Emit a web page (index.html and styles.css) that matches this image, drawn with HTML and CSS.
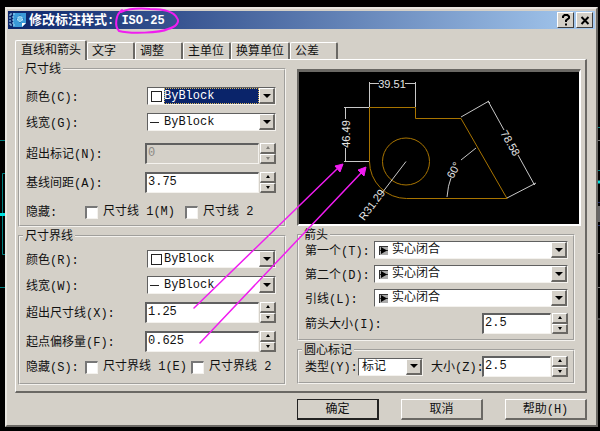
FILE: index.html
```
<!DOCTYPE html>
<html lang="zh-CN">

<head>
    <meta charset="UTF-8">
    <meta name="viewport" content="width=device-width, initial-scale=1.0">
    <title>修改标注样式: ISO-25</title>
    <link rel="stylesheet" href="styles.css">
</head>

<body>
    <!-- Drawing area behind the dialog -->
    <svg class="canvas" width="600" height="431" viewBox="0 0 600 431" aria-hidden="true">
        <g fill="none" stroke="#008080">
            <path d="M0 140.500H6M6 173.500H2.500V254.500H6M0 287.500H6M597 127.500H600M597 170.500H600" />
            <path d="M0 214.500H6M597 182H600" stroke="#00e0e0" stroke-width="3" />
            <path d="M597 140.500H600M597 253.500H600M597 287.500H600M597 319H600" stroke="#777" />
            <path d="M598.500 206V222" stroke="#666" stroke-width="3" />
            <path d="M597 202.500H600M597 225.500H600" stroke="#23306a" />
        </g>
    </svg>

    <main class="dialog">
        <header class="titlebar">
            <svg class="app-icon" width="18" height="16" viewBox="0 0 18 16" aria-hidden="true">
                <path d="M4 1H17V11L13 15H4Z" fill="#3a9ad9" />
                <path d="M17 11H13V15Z" fill="#fff" />
                <path d="M1 2H7M1 13H7M1 2V13M3 5H6M3 8H6M3 11H6" stroke="#9fd4f2" fill="none" stroke-dasharray="2 1" />
                <path d="M7 7H15M11 3V11" stroke="#1763a6" fill="none" />
                <circle cx="11" cy="7" r="2.500" fill="#7cc8ee" stroke="#d5f0fb" stroke-dasharray="2 1" />
            </svg>
            <h1>修改标注样式<span>: ISO-25</span></h1>
            <button class="title-btn" type="button" aria-label="帮助">
                <svg width="10" height="12" viewBox="0 0 10 12"><path d="M2 4V2.500L3.500 1H6.500L8 2.500V4L5 6.500V8M5 9.500V11.500" fill="none" stroke="#000" stroke-width="2" /></svg>
            </button>
            <button class="title-btn" type="button" aria-label="关闭">
                <svg width="10" height="12" viewBox="0 0 10 12"><path d="M1.500 3L8.500 10M8.500 3L1.500 10" stroke="#000" stroke-width="2" /></svg>
            </button>
        </header>

        <!-- Tabs -->
        <nav class="tabs" role="tablist">
            <button class="tab active" type="button" role="tab" aria-selected="true">直线和箭头</button>
            <button class="tab" type="button" role="tab">文字</button>
            <button class="tab" type="button" role="tab">调整</button>
            <button class="tab" type="button" role="tab">主单位</button>
            <button class="tab" type="button" role="tab">换算单位</button>
            <button class="tab" type="button" role="tab">公差</button>
        </nav>

        <div class="panel">
            <div class="column">
                <!-- Dimension lines -->
                <fieldset class="group group-dim">
                    <legend>尺寸线</legend>
                    <div class="row">
                        <label for="dimColor">颜色(C):</label>
                        <div class="combo focused">
                            <i class="swatch"></i>
                            <select id="dimColor"><option>ByBlock</option></select>
                            <i class="arrow"></i>
                        </div>
                    </div>
                    <div class="row">
                        <label for="dimWeight">线宽(G):</label>
                        <div class="combo">
                            <i class="dash"></i>
                            <select id="dimWeight"><option>ByBlock</option></select>
                            <i class="arrow"></i>
                        </div>
                    </div>
                    <div class="row spaced">
                        <label for="dimExtend">超出标记(N):</label>
                        <div class="spinner">
                            <input type="text" id="dimExtend" value="0" disabled>
                            <div class="steps">
                                <button type="button" aria-label="增加" disabled></button>
                                <button type="button" aria-label="减少" disabled></button>
                            </div>
                        </div>
                    </div>
                    <div class="row">
                        <label for="baseline">基线间距(A):</label>
                        <div class="spinner">
                            <input type="text" id="baseline" value="3.75">
                            <div class="steps">
                                <button type="button" aria-label="增加"></button>
                                <button type="button" aria-label="减少"></button>
                            </div>
                        </div>
                    </div>
                    <div class="row checks spaced">
                        <span class="caption">隐藏:</span>
                        <label><input type="checkbox">尺寸线 1(M)</label>
                        <label><input type="checkbox">尺寸线 2</label>
                    </div>
                </fieldset>

                <!-- Extension lines -->
                <fieldset class="group group-ext">
                    <legend>尺寸界线</legend>
                    <div class="row">
                        <label for="extColor">颜色(R):</label>
                        <div class="combo">
                            <i class="swatch"></i>
                            <select id="extColor"><option>ByBlock</option></select>
                            <i class="arrow"></i>
                        </div>
                    </div>
                    <div class="row">
                        <label for="extWeight">线宽(W):</label>
                        <div class="combo">
                            <i class="dash"></i>
                            <select id="extWeight"><option>ByBlock</option></select>
                            <i class="arrow"></i>
                        </div>
                    </div>
                    <div class="row">
                        <label for="extBeyond">超出尺寸线(X):</label>
                        <div class="spinner">
                            <input type="text" id="extBeyond" value="1.25">
                            <div class="steps">
                                <button type="button" aria-label="增加"></button>
                                <button type="button" aria-label="减少"></button>
                            </div>
                        </div>
                    </div>
                    <div class="row">
                        <label for="extOffset">起点偏移量(F):</label>
                        <div class="spinner">
                            <input type="text" id="extOffset" value="0.625">
                            <div class="steps">
                                <button type="button" aria-label="增加"></button>
                                <button type="button" aria-label="减少"></button>
                            </div>
                        </div>
                    </div>
                    <div class="row checks">
                        <span class="caption">隐藏(S):</span>
                        <label><input type="checkbox">尺寸界线 1(E)</label>
                        <label><input type="checkbox">尺寸界线 2</label>
                    </div>
                </fieldset>
            </div>

            <div class="column">
                <!-- Preview -->
                <div class="preview">
                    <svg viewBox="0 0 280 152" role="img" aria-label="预览">
                        <g fill="none" stroke="#a87400">
                            <path d="M70.500 89.500V35.500H116.500V46.500H162L208 126.500H107.500A37 37 0 0 1 70.500 89.500" />
                            <circle cx="107" cy="89.500" r="23.500" />
                        </g>
                        <g fill="none" stroke="#c8c8c8">
                            <path d="M70.500 35V10M116.500 35V10M70 11.500H80M106 11.500H117" />
                            <path d="M70 35.500H45M70 89.500H45M46.500 35V47M46.500 76V90" />
                            <path d="M107 89.500L83 121M162 45L190 29M208 126L237 111M189 29L205 58M219 83L235 112" />
                            <path d="M148 125Q149 113 152 106M162 88L177 76M189 29L191 31M234 111L236 113" />
                        </g>
                        <g class="dims">
                            <text x="93" y="16">39.51</text>
                            <text transform="translate(51 62) rotate(-90)">46.49</text>
                            <text transform="translate(76 135) rotate(-53)">R31.29</text>
                            <text transform="translate(158 100) rotate(-62)">60°</text>
                            <text transform="translate(208 73) rotate(60)">78.58</text>
                        </g>
                    </svg>
                </div>

                <!-- Arrowheads -->
                <fieldset class="group group-arrow">
                    <legend>箭头</legend>
                    <div class="row">
                        <label for="first">第一个(T):</label>
                        <div class="combo">
                            <svg class="head" width="9" height="9" viewBox="0 0 9 9"><path d="M0 0H9V9H0Z" fill="#aaa" /><path d="M0 4.500H9M.5 0V9M0 .5H9" stroke="#333" /><path d="M2 1L8 4.500L2 8Z" /></svg>
                            <select id="first"><option>实心闭合</option></select>
                            <i class="arrow"></i>
                        </div>
                    </div>
                    <div class="row">
                        <label for="second">第二个(D):</label>
                        <div class="combo">
                            <svg class="head" width="9" height="9" viewBox="0 0 9 9"><path d="M0 0H9V9H0Z" fill="#aaa" /><path d="M0 4.500H9M.5 0V9M0 .5H9" stroke="#333" /><path d="M2 1L8 4.500L2 8Z" /></svg>
                            <select id="second"><option>实心闭合</option></select>
                            <i class="arrow"></i>
                        </div>
                    </div>
                    <div class="row">
                        <label for="leader">引线(L):</label>
                        <div class="combo">
                            <svg class="head" width="9" height="9" viewBox="0 0 9 9"><path d="M0 0H9V9H0Z" fill="#aaa" /><path d="M0 4.500H9M.5 0V9M0 .5H9" stroke="#333" /><path d="M2 1L8 4.500L2 8Z" /></svg>
                            <select id="leader"><option>实心闭合</option></select>
                            <i class="arrow"></i>
                        </div>
                    </div>
                    <div class="row">
                        <label for="arrowSize">箭头大小(I):</label>
                        <div class="spinner short">
                            <input type="text" id="arrowSize" value="2.5">
                            <div class="steps">
                                <button type="button" aria-label="增加"></button>
                                <button type="button" aria-label="减少"></button>
                            </div>
                        </div>
                    </div>
                </fieldset>

                <!-- Center marks -->
                <fieldset class="group group-center">
                    <legend>圆心标记</legend>
                    <div class="row">
                        <label for="markType">类型(Y):</label>
                        <div class="combo">
                            <select id="markType"><option>标记</option></select>
                            <i class="arrow"></i>
                        </div>
                        <label for="markSize">大小(Z):</label>
                        <div class="spinner short">
                            <input type="text" id="markSize" value="2.5">
                            <div class="steps">
                                <button type="button" aria-label="增加"></button>
                                <button type="button" aria-label="减少"></button>
                            </div>
                        </div>
                    </div>
                </fieldset>
            </div>
        </div>

        <footer class="actions">
            <button class="default" type="button">确定</button>
            <button type="button">取消</button>
            <button type="button">帮助(H)</button>
        </footer>
    </main>

    <!-- Marker pen notes on top of the dialog -->
    <svg class="notes" width="600" height="431" viewBox="0 0 600 431" aria-hidden="true">
        <g fill="none" stroke="#f01cf0" stroke-linecap="round">
            <path d="M122 10C116 14 114 26 119 31C130 34 160 33 168 29C176 27 180 22 177 18C174 12 164 9 150 9C138 8 128 9 121 12" stroke-width="2" />
            <path d="M194 308L337 169M200 343L361 173" stroke-width="1.500" />
        </g>
        <path d="M343 164L340 172L335 166ZM366 167L364 176L358 170Z" fill="#f01cf0" stroke="#f01cf0" />
    </svg>
</body>

</html>
```
FILE: styles.css
```
* {
    box-sizing: border-box;
}

body {
    margin: 0;
    padding: 7px 2px 4px 5px;
    background: #000;
    color: #111;
    font-family: "Liberation Mono", "Noto Sans CJK SC", monospace;
    font-size: 12px;
    line-height: 12px;
}

button, input, select {
    margin: 0;
    padding: 0;
    border: 0;
    border-radius: 0;
    color: inherit;
    font: inherit;
}

.canvas, .notes {
    position: absolute;
    top: 0;
    left: 0;
    pointer-events: none;
}

/* Window frame */
.dialog {
    position: relative;
    padding: 2px 1px 5px;
    background: #d4d0c8;
    border: 2px solid;
    border-color: #e8e6e0 #6a6864 #6a6864 #e8e6e0;
}

.titlebar {
    display: flex;
    align-items: center;
    height: 18px;
    padding: 0 2px 0 1px;
    background: linear-gradient(to right, #0a246a, #a6caf0);
}

.titlebar h1 {
    flex: 1;
    margin: 0 0 0 2px;
    padding-top: 2px;
    color: #fff;
    font-size: 13px;
    font-weight: bold;
}

.titlebar h1 span {
    font-size: 12px;
}

.title-btn {
    display: grid;
    place-items: center;
    width: 17px;
    height: 16px;
    margin-left: 2px;
    background: #d4d0c8;
    border: 1px solid;
    border-color: #fff #404040 #404040 #fff;
}

/* Tabs */
.tabs {
    display: flex;
    align-items: flex-end;
    margin: 11px 0 0 7px;
}

.tab {
    width: 48px;
    height: 17px;
    background: #d4d0c8;
    border: solid;
    border-width: 1px 2px 0 1px;
    border-color: #fff #6a6864 #fff #fff;
    border-radius: 2px 2px 0 0;
    padding: 2px 0 0 4px;
    text-align: left;
    white-space: nowrap;
}

.tab.active {
    position: relative;
    z-index: 1;
    width: 72px;
    height: 20px;
    margin-bottom: -1px;
    padding: 0 0 0 5px;
}

.tab:nth-child(5) {
    width: 59px;
}

.panel {
    display: grid;
    grid-template-columns: 268fr 284fr;
    column-gap: 11px;
    margin: 0 8px 0 7px;
    padding: 3px 4px 6px 2px;
    border: solid;
    border-width: 1px 2px 2px 1px;
    border-color: #fff #6a6864 #6a6864 #fff;
}

.column {
    display: flex;
    flex-direction: column;
    gap: 3px;
    min-width: 0;
}

/* Group boxes */
.group {
    display: flex;
    flex-direction: column;
    gap: 8px;
    min-width: 0;
    margin: 0;
    padding: 8px 8px 9px 6px;
    border: 2px groove #f4f2ee;
}

.group legend {
    height: 12px;
    margin-left: -3px;
    padding: 1px 2px 0;
}

.group-dim {
    padding: 12px 8px 6px 6px;
}

.group-arrow, .group-center {
    gap: 6px;
    margin-right: 6px;
    padding: 0 5px 5px 6px;
}

.row {
    display: flex;
    align-items: center;
}

.row > label {
    flex: none;
    width: 119px;
    padding-top: 3px;
    white-space: nowrap;
}

.row .combo {
    flex: 1;
    margin-left: 2px;
}

.spaced {
    margin-top: 4px;
}

.group-arrow .row > label {
    width: 67px;
}

.group-arrow .row .short, .group-center .row .short {
    flex: none;
    width: 86px;
    margin-left: auto;
}

.group-center .row > label {
    width: 51px;
}

.group-center .row .combo {
    margin-right: 8px;
}

/* Drop-downs */
.combo {
    display: flex;
    align-items: center;
    height: 18px;
    background: #fff;
    border: 1px solid;
    border-color: #606060 #f4f2ee #f4f2ee #606060;
    min-width: 0;
}

.combo select {
    flex: 1;
    align-self: stretch;
    min-width: 0;
    appearance: none;
    background: transparent;
    line-height: 16px;
    outline: none;
}

.combo.focused select {
    background: #0a246a;
    color: #fff;
    outline: 1px dotted #d8b860;
    outline-offset: -1px;
}

.swatch {
    width: 11px;
    height: 11px;
    margin: 0 2px 0 3px;
    border: 1px solid #222;
    background: #fff;
}

.dash {
    width: 9px;
    height: 1px;
    margin: 0 5px 0 2px;
    background: #222;
}

.head {
    margin: 0 4px;
}

.group-center select {
    padding-left: 3px;
}

.arrow {
    display: grid;
    place-items: center;
    width: 16px;
    align-self: stretch;
    background: #d4d0c8;
    border: solid;
    border-width: 1px 2px 2px 1px;
    border-color: #fff #6a6864 #6a6864 #fff;
    pointer-events: none;
}

.arrow::before {
    content: "";
    border: 4px solid transparent;
    border-top-color: #000;
    border-bottom: 0;
}

/* Number boxes */
.spinner {
    display: flex;
    flex: 1;
    gap: 1px;
    height: 21px;
    min-width: 0;
}

.spinner input {
    flex: 1;
    min-width: 0;
    padding: 0 0 2px 1px;
    background: #fff;
    border: solid;
    border-width: 2px 1px 1px 2px;
    border-color: #606060 #f4f2ee #f4f2ee #606060;
}

.spinner input:disabled {
    background: #d4d0c8;
    color: #8c8984;
}

.steps {
    display: grid;
    grid-template-rows: 1fr 1fr;
    width: 16px;
}

.steps button {
    display: grid;
    place-items: center;
    background: #d4d0c8;
    border: solid;
    border-width: 1px 2px 2px 1px;
    border-color: #fff #6a6864 #6a6864 #fff;
}

.steps button::before {
    content: "";
    border: 2px solid transparent;
    border-bottom: 3px solid #000;
    border-top: 0;
}

.steps button:last-child::before {
    border-top: 3px solid #000;
    border-bottom: 0;
}

.steps button:disabled::before {
    opacity: 0.4;
}

/* Tick boxes */
.checks .caption {
    flex: none;
    width: 59px;
    padding-top: 2px;
    white-space: nowrap;
}

.row.checks > label {
    display: flex;
    align-items: center;
    width: 100px;
    padding-top: 0;
}

.group-ext .row.checks > label {
    width: 106px;
}

.row.checks > label:last-child {
    width: auto;
}

.checks input {
    appearance: none;
    width: 13px;
    height: 13px;
    margin-right: 5px;
    background: #fff;
    border: solid;
    border-width: 2px 1px 1px 2px;
    border-color: #777 #f4f2ee #f4f2ee #777;
}

/* Preview */
.preview {
    margin-top: 6px;
    height: 157px;
    background: #000;
    border: solid;
    border-width: 3px 2px 2px;
    border-color: #6a6864 #fff #fff #6a6864;
}

.preview svg {
    display: block;
    width: 100%;
    height: 100%;
}

.dims text {
    fill: #e4e4e4;
    font-family: "Liberation Sans", sans-serif;
    font-size: 11px;
    text-anchor: middle;
}

/* Bottom buttons */
.actions {
    display: flex;
    justify-content: flex-end;
    gap: 22px;
    margin: 6px 8px 0 0;
}

.actions button {
    width: 82px;
    height: 21px;
    padding-top: 2px;
    background: #d4d0c8;
    border: solid;
    border-width: 1px 2px 2px 1px;
    border-color: #fff #6a6864 #6a6864 #fff;
}

.actions .default {
    border-color: #222;
}
```
